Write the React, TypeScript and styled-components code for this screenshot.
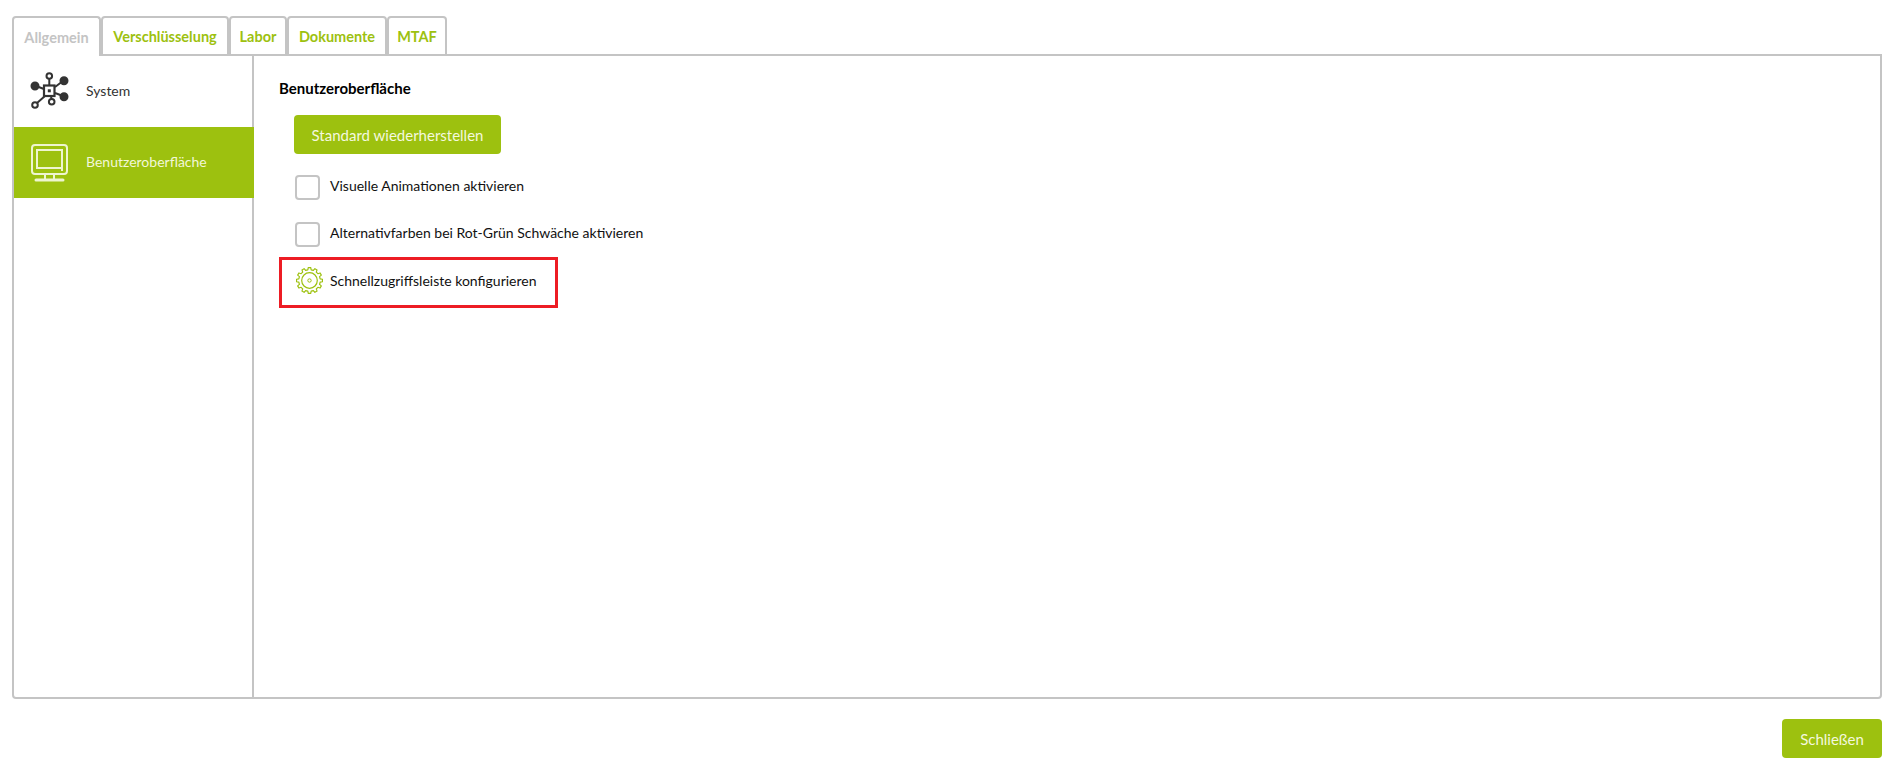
import React from 'react';
import styled, { createGlobalStyle } from 'styled-components';

const GREEN = '#9dc10f';
const LINE = '#c4c4c4';

const GlobalStyle = createGlobalStyle`
  html, body { margin: 0; padding: 0; background: #fff; }
  body { font-family: Lato, "Open Sans", sans-serif; color: #1a1a1a; }
`;

const Page = styled.div`
  width: 1902px;
  height: 770px;
  padding: 16px 20px 0 12px;
  box-sizing: border-box;
  display: flex;
  flex-direction: column;
  overflow: hidden;
`;

const TabBar = styled.div`
  display: flex;
  height: 40px;
  position: relative;
  z-index: 1;
  margin-bottom: -2px;
`;

const Tab = styled.div<{ $active?: boolean; $w: number }>`
  width: ${p => p.$w}px;
  box-sizing: border-box;
  border: 2px solid ${LINE};
  border-bottom: ${p => (p.$active ? 'none' : `2px solid ${LINE}`)};
  border-radius: 4px 4px 0 0;
  background: #fff;
  color: ${p => (p.$active ? '#c4c4c4' : GREEN)};
  font-size: 14.5px;
  font-weight: 700;
  display: flex;
  align-items: center;
  justify-content: center;
`;

const Panel = styled.div`
  width: 1870px;
  height: 645px;
  box-sizing: border-box;
  border: 2px solid ${LINE};
  border-radius: 0 0 4px 4px;
  display: flex;
`;

const Sidebar = styled.div`
  width: 238px;
  flex: none;
  border-right: 2px solid ${LINE};
  display: flex;
  flex-direction: column;
`;

const MenuItem = styled.div<{ $active?: boolean }>`
  height: 71px;
  display: flex;
  align-items: center;
  gap: 16px;
  padding-left: 16px;
  margin-right: ${p => (p.$active ? '-2px' : '0')};
  background: ${p => (p.$active ? GREEN : '#fff')};
  color: ${p => (p.$active ? '#f2f7d8' : '#333')};
  font-size: 14px;
`;

const Label = styled.span`
  margin-top: -3px;
`;

const Content = styled.div`
  flex: 1;
  padding: 23px 0 0 25px;
  display: flex;
  flex-direction: column;
  align-items: flex-start;
`;

const Heading = styled.div`
  font-size: 15px;
  font-weight: 700;
  color: #000;
  line-height: 19px;
  margin-bottom: 17px;
`;

const GreenButton = styled.button<{ $w: number }>`
  width: ${p => p.$w}px;
  height: 39px;
  border: none;
  border-radius: 4px;
  background: ${GREEN};
  color: #f4f8de;
  font-family: Lato, sans-serif;
  font-size: 15px;
  padding: 0;
`;

const ResetButton = styled(GreenButton)`
  margin-left: 15px;
`;

const CheckRow = styled.div`
  display: flex;
  align-items: center;
  height: 26px;
  margin: 20px 0 0 16px;
  gap: 10px;
  font-size: 14px;
  color: #111;

  & + & {
    margin-top: 21px;
  }
`;

const Box = styled.span`
  width: 25px;
  height: 25px;
  box-sizing: border-box;
  border: 2px solid ${LINE};
  border-radius: 4px;
  background: #fff;
`;

const Highlight = styled.div`
  margin-top: 10px;
  width: 279px;
  height: 51px;
  box-sizing: border-box;
  border: 3px solid #ed1c24;
  display: flex;
  align-items: center;
  gap: 7px;
  padding: 0 0 4px 14px;
  font-size: 14px;
  color: #111;
`;

const Footer = styled.div`
  display: flex;
  justify-content: flex-end;
  margin-top: 20px;
  width: 1870px;
`;

const SystemIcon = () => (
  <svg width="40" height="40" viewBox="0 0 40 40" fill="none" stroke="#333" strokeWidth="2">
    <path d="M19.300 13 V7 M14 17 L6 14 M25 15 L33 9 M25 21 L33 24 M21 24 L21.500 27 M15 24 L7 31" />
    <rect x="14" y="13.500" width="10.500" height="10.500" strokeWidth="2.200" />
    <rect x="17.800" y="17.300" width="3" height="3" fill="#333" strokeWidth="0" />
    <circle cx="19.300" cy="4" r="2.800" />
    <circle cx="5" cy="14" r="3.500" fill="#333" />
    <circle cx="34" cy="8.700" r="3.500" fill="#333" />
    <circle cx="34" cy="24.700" r="3.500" fill="#333" />
    <circle cx="21.700" cy="29.700" r="2.800" />
    <circle cx="5" cy="33" r="2.800" />
  </svg>
);

const ScreenIcon = () => (
  <svg width="40" height="40" viewBox="0 0 40 40" fill="none" stroke="#eef5cf" strokeWidth="2">
    <rect x="2" y="2" width="35" height="29" rx="3" />
    <rect x="7" y="7" width="25" height="18" />
    <path d="M15 31 V36 M24 31 V36" />
    <path d="M6 37 H33" strokeWidth="3" strokeLinecap="round" />
    <rect x="31" y="26" width="2" height="2" fill="#eef5cf" strokeWidth="0" />
  </svg>
);

// gear outline worked out from the tooth count, so the teeth stay even
const gearPath = (teeth: number, inner: number, outer: number, c: number) => {
  const step = (Math.PI * 2) / teeth;
  const pts: string[] = [];
  for (let i = 0; i < teeth; i++) {
    const a = i * step;
    const at = (r: number, o: number) =>
      `${(c + r * Math.cos(a + o * step)).toFixed(2)} ${(c + r * Math.sin(a + o * step)).toFixed(2)}`;
    pts.push(at(inner, -0.3), at(outer, -0.18), at(outer, 0.18), at(inner, 0.3));
  }
  return `M${pts.join(' L')} Z`;
};

const GearIcon = () => (
  <svg width="27" height="27" viewBox="0 0 27 27" fill="none" stroke={GREEN} strokeWidth="1.200" strokeLinejoin="round">
    <path d={gearPath(12, 10.800, 13, 13.500)} />
    <circle cx="13.500" cy="13.500" r="7.800" />
    <circle cx="13.500" cy="13.500" r="1.700" strokeWidth="1" />
  </svg>
);

const tabs = [
  { label: 'Allgemein', w: 89, active: true },
  { label: 'Verschlüsselung', w: 128 },
  { label: 'Labor', w: 58 },
  { label: 'Dokumente', w: 100 },
  { label: 'MTAF', w: 60 },
];

const App: React.FC = () => (
  <Page>
    <GlobalStyle />
    <TabBar>
      {tabs.map(t => (
        <Tab key={t.label} $active={t.active} $w={t.w}>{t.label}</Tab>
      ))}
    </TabBar>
    <Panel>
      <Sidebar>
        <MenuItem><SystemIcon /><Label>System</Label></MenuItem>
        <MenuItem $active><ScreenIcon /><Label>Benutzeroberfläche</Label></MenuItem>
      </Sidebar>
      <Content>
        <Heading>Benutzeroberfläche</Heading>
        <ResetButton $w={207}>Standard wiederherstellen</ResetButton>
        <CheckRow><Box /><Label>Visuelle Animationen aktivieren</Label></CheckRow>
        <CheckRow><Box /><Label>Alternativfarben bei Rot-Grün Schwäche aktivieren</Label></CheckRow>
        <Highlight><GearIcon />Schnellzugriffsleiste konfigurieren</Highlight>
      </Content>
    </Panel>
    <Footer>
      <GreenButton $w={100}>Schließen</GreenButton>
    </Footer>
  </Page>
);

export default App;
